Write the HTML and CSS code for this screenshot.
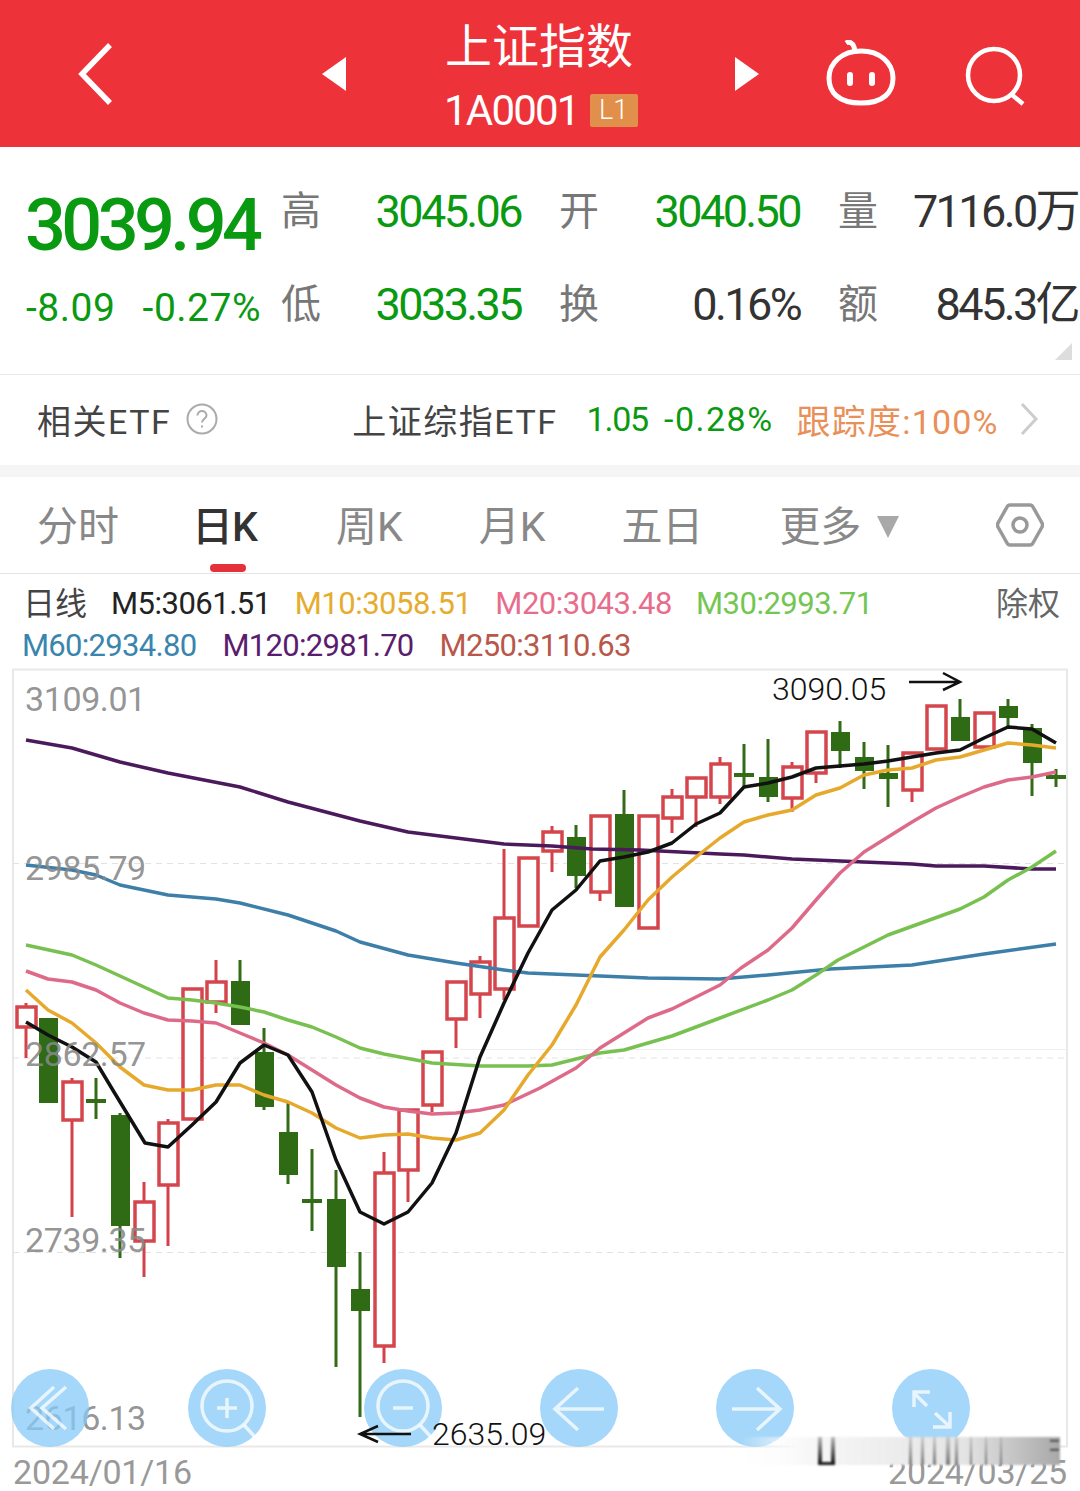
FILE: index.html
```html
<!DOCTYPE html>
<html lang="zh">
<head>
<meta charset="utf-8">
<title>上证指数</title>
<link rel="stylesheet" href="styles.css">
</head>
<body>
<div class="page">
  <header class="topbar">
    <svg class="ico-back" viewBox="0 0 36 64"><path d="M33 3 5 32l28 29"/></svg>
    <span class="tri tri-left"></span>
    <div class="title">
      <div class="title-name">上证指数</div>
      <div class="title-code"><span>1A0001</span><span class="badge">L1</span></div>
    </div>
    <span class="tri tri-right"></span>
    <svg class="ico-robot" viewBox="0 0 70 66"><path d="M20 3c3-2 7 0 8 4 1 3 1 4 0 6"/><path d="M35 11c19 0 32 12 32 27 0 14-9 25-32 25S3 52 3 38c0-15 13-27 32-27Z"/><path class="eye" d="M24 35v8M46 35v8"/></svg>
    <svg class="ico-search" viewBox="0 0 62 60"><circle cx="30" cy="29" r="26"/><path d="M47 48l12 10"/></svg>
  </header>

  <section class="quote">
    <div class="quote-main">
      <div class="price">3039.94</div>
      <div class="change"><span>-8.09</span><span>-0.27%</span></div>
    </div>
    <div class="stats">
      <span class="k">高</span><span class="v down">3045.06</span>
      <span class="k">开</span><span class="v down">3040.50</span>
      <span class="k">量</span><span class="v">7116.0万</span>
      <span class="k">低</span><span class="v down">3033.35</span>
      <span class="k">换</span><span class="v">0.16%</span>
      <span class="k">额</span><span class="v">845.3亿</span>
    </div>
    <span class="corner"></span>
  </section>

  <section class="etf">
    <span class="etf-label">相关ETF</span>
    <svg class="ico-help" viewBox="0 0 32 32"><circle cx="16" cy="16" r="14.500"/><path d="M11.500 12.500c0-6 9-6 9 0 0 3-4.500 3.500-4.500 7"/><path d="M16 22.500v2"/></svg>
    <span class="etf-name">上证综指ETF</span>
    <span class="etf-num">1.05</span>
    <span class="etf-pct">-0.28%</span>
    <span class="etf-track">跟踪度:100%</span>
    <svg class="ico-next" viewBox="0 0 18 34"><path d="M2 2l14 15L2 32"/></svg>
  </section>

  <nav class="tabs">
    <span class="tab">分时</span>
    <span class="tab active">日K</span>
    <span class="tab">周K</span>
    <span class="tab">月K</span>
    <span class="tab">五日</span>
    <span class="tab">更多<i class="more"></i></span>
    <svg class="ico-hex" viewBox="0 0 48 48"><path d="M14 4h20q2 0 3 2l9 16q1 2 0 4l-9 16q-1 2-3 2H14q-2 0-3-2L2 26q-1-2 0-4l9-16q1-2 3-2Z"/><circle cx="24" cy="24" r="7"/></svg>
  </nav>

  <section class="legend">
    <div class="legend-row">
      <span class="legend-name">日线</span>
      <span class="c5">M5:3061.51</span>
      <span class="c10">M10:3058.51</span>
      <span class="c20">M20:3043.48</span>
      <span class="c30">M30:2993.71</span>
      <span class="legend-fq">除权</span>
    </div>
    <div class="legend-row row2">
      <span class="c60">M60:2934.80</span>
      <span class="c120">M120:2981.70</span>
      <span class="c250">M250:3110.63</span>
    </div>
  </section>

  <svg class="chart" viewBox="0 669 1080 778">
    <rect class="frame" x="13" y="669.500" width="1054" height="777"/>
    <path class="grid" d="M13 863.500H1067M13 1058H1067M13 1252.500H1067"/>
    <path class="grid-solid" d="M460 1049.500H1067"/>

    <path class="wick gr" d="M96 1078V1119M120 1113V1258M240 960V1025M264 1028V1110M288 1103V1184M312 1149V1231M336 1170V1367M360 1252V1417M576 825V888M624 790V907M744 744V787M768 739V802M840 721V768M864 742V789M888 745V807M960 699V741M1008 699V727M1032 724V796M1056 769V787"/>
    <path class="body gr" d="M39 1018h19v85H39ZM111 1115h19v111h-19ZM231 981h19v44h-19ZM255 1052h19v55h-19ZM279 1132h19v43h-19ZM327 1199h19v68h-19ZM351 1289h19v22h-19ZM567 837h19v39h-19ZM615 814h19v93h-19ZM759 777h19v20h-19ZM831 732h19v19h-19ZM855 757h19v14h-19ZM879 773h19v6h-19ZM951 717h19v24h-19ZM999 706h19v12h-19ZM1023 728h19v35h-19Z"/>
    <path class="doji" d="M86 1101h20M302 1201h20M734 775h20M1046 777h20"/>

    <path class="wick rd" d="M26 1003V1058M72 1078V1217M144 1182V1277M168 1119V1246M216 960V1013M384 1152V1363M408 1170V1202M432 1105V1112M456 1019V1048M480 956V1018M504 849V1000M552 826V872M600 892V901M672 789V833M696 777V827M720 757V804M792 762V812M816 773V783M912 752V802M984 712V750"/>
    <path class="body rd" d="M17 1007h19v20H17ZM63 1082h19v38H63ZM135 1202h19v39h-19ZM159 1123h19v62h-19ZM183 989h19v130h-19ZM207 982h19v20h-19ZM375 1173h19v173h-19ZM399 1110h19v60h-19ZM423 1052h19v53h-19ZM447 982h19v37h-19ZM471 962h19v32h-19ZM495 918h19v71h-19ZM519 858h19v68h-19ZM543 832h19v19h-19ZM591 816h19v76h-19ZM639 816h19v112h-19ZM663 797h19v21h-19ZM687 778h19v19h-19ZM711 764h19v33h-19ZM783 767h19v31h-19ZM807 732h19v41h-19ZM903 753h19v37h-19ZM927 706h19v43h-19ZM975 713h19v34h-19Z"/>

    <polyline class="ma m120" points="26,740 72,748 120,762 168,773 240,787 288,802 360,821 408,832 456,838 504,844 552,846 592,849 640,850 720,854 744,855 792,859 864,862 912,864 936,866 984,866 1032,869 1056,869"/>
    <polyline class="ma m60" points="26,865 72,870 96,875 120,885 168,895 216,899 240,903 288,915 336,931 360,942 408,955 456,963 504,970 528,973 576,975 624,977 648,978 720,979 768,975 830,969 912,965 984,954 1056,944"/>
    <polyline class="ma m30" points="26,945 72,955 96,965 144,987 168,998 192,1000 216,1003 240,1007 264,1012 288,1020 312,1027 336,1037 360,1048 384,1054 432,1063 480,1066 528,1066 552,1065 576,1059 600,1053 624,1050 672,1036 720,1018 768,1000 792,990 816,975 838,960 888,935 960,909 984,897 1008,880 1032,867 1056,851"/>
    <polyline class="ma m20" points="26,971 48,979 72,982 96,990 120,1003 144,1013 168,1020 192,1021 216,1023 240,1033 264,1043 288,1055 312,1070 336,1085 360,1098 384,1107 408,1111 432,1114 456,1113 480,1110 504,1105 540,1088 576,1068 600,1048 648,1018 672,1009 720,985 741,968 768,950 792,928 816,900 840,873 864,852 888,837 912,822 936,808 960,797 984,787 1008,780 1032,777 1056,772"/>
    <polyline class="ma m10" points="26,990 48,1010 72,1023 96,1043 120,1067 144,1085 168,1090 192,1090 216,1085 240,1085 264,1095 288,1102 312,1113 336,1128 360,1138 384,1135 408,1134 432,1138 456,1140 480,1133 504,1110 528,1075 552,1045 576,1005 600,957 624,930 648,900 672,877 696,857 720,838 744,822 768,815 792,810 816,795 840,788 864,775 888,770 912,768 936,760 960,757 984,750 1008,743 1032,745 1056,748"/>
    <polyline class="ma m5" points="26,1022 48,1035 72,1047 96,1062 114,1092 145,1143 168,1147 192,1125 216,1102 240,1063 264,1045 288,1055 312,1092 336,1160 360,1212 384,1224 408,1212 432,1183 456,1133 480,1057 504,1003 528,953 552,910 576,890 600,861 624,857 648,852 672,843 696,824 720,813 744,787 768,783 792,777 816,768 840,766 864,764 888,761 912,757 936,753 960,750 984,738 1008,727 1032,729 1056,743"/>

    <text class="axis" x="25" y="711">3109.01</text>
    <text class="axis" x="25" y="880">2985.79</text>
    <text class="axis" x="25" y="1066">2862.57</text>
    <text class="axis" x="25" y="1252">2739.35</text>
    <text class="axis" x="25" y="1430">2616.13</text>

    <g class="btn">
      <circle cx="50" cy="1408" r="39"/>
      <path class="btn-ico" d="M66 1387 42 1408l24 21M54 1387 31 1408l23 21"/>
    </g>
    <g class="btn">
      <circle cx="227" cy="1408" r="39"/>
      <circle class="btn-ico" cx="227" cy="1406" r="25"/>
      <path class="btn-ico" d="M217 1408h20M227 1398v20M244 1425l11 12"/>
    </g>
    <g class="btn">
      <circle cx="403" cy="1408" r="39"/>
      <circle class="btn-ico" cx="403" cy="1406" r="25"/>
      <path class="btn-ico" d="M393 1408h20M420 1425l11 12"/>
    </g>
    <g class="btn">
      <circle cx="579" cy="1408" r="39"/>
      <path class="btn-ico" d="M604 1409H556M578 1388l-23 21 23 21"/>
    </g>
    <g class="btn">
      <circle cx="755" cy="1408" r="39"/>
      <path class="btn-ico" d="M732 1409h48M757 1388l23 21-23 21"/>
    </g>
    <g class="btn">
      <circle cx="931" cy="1408" r="39"/>
      <path class="btn-ico" d="M915 1394l12 12M935 1413l14 13M914 1407v-15h16M950 1412v15h-17"/>
    </g>

    <path class="mark" d="M909 682H960M943 673l17 9-17 8M411 1434H360M378 1426l-18 8 18 8"/>
    <text class="note" x="772" y="700">3090.05</text>
    <text class="note" x="432" y="1445">2635.09</text>
  </svg>

  <footer class="dates"><span>2024/01/16</span><span>2024/03/25</span></footer>

  <svg class="stamp" viewBox="0 0 340 40">
    <defs>
      <linearGradient id="band" x1="0" x2="1" y1="0" y2="0">
        <stop offset="0" stop-color="#fff" stop-opacity="0"/>
        <stop offset=".2" stop-color="#f8f8f8"/>
        <stop offset=".7" stop-color="#e4e4e4"/>
        <stop offset="1" stop-color="#a8a8a8"/>
      </linearGradient>
      <linearGradient id="bar" x1="0" x2="0" y1="0" y2="1">
        <stop offset="0" stop-color="#888" stop-opacity=".3"/>
        <stop offset="1" stop-color="#777"/>
      </linearGradient>
      <linearGradient id="stub" x1="0" x2="0" y1="0" y2="1">
        <stop offset="0" stop-color="#bbb"/>
        <stop offset="1" stop-color="#111"/>
      </linearGradient>
    </defs>
    <rect x="0" y="5" width="320" height="28" fill="url(#band)"/>
    <path d="M78 5v28h17V5h-4v25h-9V5Z" fill="url(#stub)"/>
    <path d="M169 5h3v28h-3ZM181 5h3v28h-3ZM193 5h3v28h-3ZM206 5h4v28h-4ZM215 5h3v28h-3ZM230 5h2v28h-2ZM245 5h2v28h-2ZM260 5h2v28h-2Z" fill="url(#bar)"/>
    <path d="M310 8h9v1.500h-9ZM310 17h9v1.500h-9Z" fill="#333"/>
  </svg>
</div>
</body>
</html>
```

FILE: styles.css
```css
* { box-sizing: border-box; }
html, body { margin: 0; padding: 0; background: #fff; }
body { font-family: Roboto, "Noto Sans CJK SC", sans-serif; }
.page { position: relative; width: 1080px; height: 1491px; overflow: hidden; background: #fff; }

/* top bar */
.topbar { position: relative; height: 147px; background: #ee323a; color: #fff; display: flex; align-items: center; }
.ico-back { width: 36px; height: 64px; margin-left: 77px; fill: none; stroke: #fff; stroke-width: 5.500; }
.tri { width: 0; height: 0; border-style: solid; border-color: transparent; }
.tri-left { margin-left: 209px; border-width: 17px 24px 17px 0; border-right-color: #fff; }
.tri-right { margin-left: 99px; border-width: 17px 0 17px 24px; border-left-color: #fff; }
.title { width: 192px; margin: 7px 0 0 98px; display: flex; flex-direction: column; align-items: flex-start; }
.title-name { font-size: 47px; line-height: 50px; font-weight: 400; margin: -3px 0 0 1px; color: #fff; }
.title-code { display: flex; align-items: center; gap: 11px; margin-top: 20px; font-size: 42px; line-height: 38px; letter-spacing: -1.800px; }
.badge { width: 48px; height: 33px; background: #e0904a; border-radius: 2px; font-size: 27px; line-height: 33px; text-align: center; letter-spacing: 0; font-weight: 300; }
.ico-robot { width: 70px; height: 66px; margin-left: 67px; margin-top: -2px; fill: none; stroke: #fff; stroke-width: 5; }
.ico-robot .eye { stroke-width: 6; stroke-linecap: round; }
.ico-search { width: 62px; height: 60px; margin-left: 68px; margin-top: 4px; fill: none; stroke: #fff; stroke-width: 4.500; }

/* quote */
.quote { position: relative; height: 228px; padding-left: 26px; display: flex; border-bottom: 1px solid #e9e9e9; }
.quote-main { width: 235px; color: #0a9a12; flex: none; }
.price { font-size: 72px; line-height: 72px; margin: 43px 0 0 -1px; font-weight: 500; letter-spacing: -4.600px; white-space: nowrap; }
.change { display: flex; justify-content: space-between; font-size: 39px; line-height: 40px; margin-top: 26px; letter-spacing: .5px; white-space: nowrap; }
.stats { margin-left: 20px; margin-top: 41px; display: grid; grid-template-columns: 40px 200px 78px 201px 78px 200px; grid-template-rows: 48px 48px; row-gap: 45px; align-items: center; }
.k { font-size: 40px; font-weight: 400; color: #777; line-height: 48px; justify-self: end; }
.v { font-size: 45px; line-height: 48px; text-align: right; color: #333; letter-spacing: -2.600px; white-space: nowrap; }
.v.down { color: #0a9a12; }
.corner { position: absolute; right: 8px; bottom: 14px; width: 0; height: 0; border-style: solid; border-width: 0 0 17px 17px; border-color: transparent transparent #ddd; }

/* ETF row */
.etf { height: 90px; display: flex; align-items: center; font-size: 34px; font-weight: 400; color: #444; padding: 0 0 2px 37px; border-bottom: 12px solid #f5f5f5; }
.etf { box-sizing: content-box; height: 88px; }
.etf-label { letter-spacing: 1.500px; white-space: nowrap; }
.ico-help { width: 32px; height: 32px; margin-left: 15px; fill: none; stroke: #aaa; stroke-width: 2; }
.etf-name { margin-left: 134px; letter-spacing: 1.500px; white-space: nowrap; }
.etf-num { color: #0a9a12; margin-left: 29px; letter-spacing: -1.200px; }
.etf-pct { color: #0a9a12; margin-left: 16px; letter-spacing: 1.500px; }
.etf-track { color: #e98f58; margin-left: 23px; letter-spacing: 1.200px; white-space: nowrap; }
.ico-next { width: 18px; height: 34px; margin-left: 21px; fill: none; stroke: #ccc; stroke-width: 3; }

/* tabs */
.tabs { position: relative; height: 97px; display: flex; align-items: center; gap: 76px; padding: 0 0 5px 37px; font-size: 41px; font-weight: 400; color: #888; border-bottom: 1px solid #e4e4e4; }
.tab { position: relative; display: flex; align-items: center; white-space: nowrap; }
.tab.active { color: #333; font-weight: 500; margin-left: -3px; margin-right: 3px; letter-spacing: -1px; }
.tab.active::after { content: ""; position: absolute; left: 18px; top: 71px; width: 36px; height: 8px; background: #e5323a; border-radius: 4px; }
.more { width: 0; height: 0; margin: 8px 0 0 16px; border-style: solid; border-width: 22px 11px 0; border-color: #a8a8a8 transparent transparent; }
.ico-hex { position: absolute; left: 996px; top: 24px; width: 48px; height: 48px; fill: none; stroke: #999; stroke-width: 3.500; }

/* legend */
.legend { height: 95px; padding: 9px 20px 0 23px; font-size: 31px; line-height: 42px; letter-spacing: -.5px; }
.legend-row { display: flex; gap: 24px; white-space: nowrap; }
.row2 { gap: 26px; margin-left: -1px; letter-spacing: -.7px; }
.legend-name { color: #444; letter-spacing: 0; font-size: 32px; }
.legend-fq { margin-left: auto; color: #666; letter-spacing: 0; font-size: 32px; }
.c5 { color: #222; }
.c10 { color: #e6ac2d; }
.c20 { color: #e86d8d; }
.c30 { color: #74c653; }
.c60 { color: #3a85ad; }
.c120 { color: #5a1d6e; }
.c250 { color: #b8584a; }

/* chart */
.chart { display: block; width: 1080px; height: 778px; overflow: visible; }
.frame { fill: none; stroke: #e8e8e8; stroke-width: 2; }
.grid { fill: none; stroke: #e2e2e2; stroke-width: 1; stroke-dasharray: 6 5; }
.grid-solid { fill: none; stroke: #eee; stroke-width: 1; }
.wick { fill: none; stroke-width: 3; }
.wick.gr { stroke: #336b17; }
.wick.rd { stroke: #d5414a; }
.body.gr { fill: #2f6a14; }
.body.rd { fill: #fff; stroke: #d5454c; stroke-width: 3.500; }
.doji { fill: none; stroke: #336b17; stroke-width: 4; }
.ma { fill: none; stroke-width: 3.500; stroke-linejoin: round; }
.m5 { stroke: #111; }
.m10 { stroke: #e6a92c; }
.m20 { stroke: #de6a8a; }
.m30 { stroke: #78c050; }
.m60 { stroke: #3d7fa8; }
.m120 { stroke: #4b1a5c; }
.axis { font-family: Roboto, sans-serif; font-size: 34px; fill: #888; fill-opacity: .9; letter-spacing: -.4px; }
.btn > circle:first-child { fill: #86c9f7; fill-opacity: .75; }
.btn-ico { fill: none; stroke: #fff; stroke-opacity: .75; stroke-width: 3.500; }
.mark { fill: none; stroke: #111; stroke-width: 2.500; }
.note { font-family: Roboto, sans-serif; font-size: 32px; fill: #111; font-weight: 300; }

/* footer */
.dates { display: flex; justify-content: space-between; padding: 6px 13px 0; font-size: 34px; line-height: 38px; color: #999; letter-spacing: -.2px; }
.stamp { position: absolute; left: 740px; top: 1432px; width: 340px; height: 40px; filter: blur(1.200px); }
```
